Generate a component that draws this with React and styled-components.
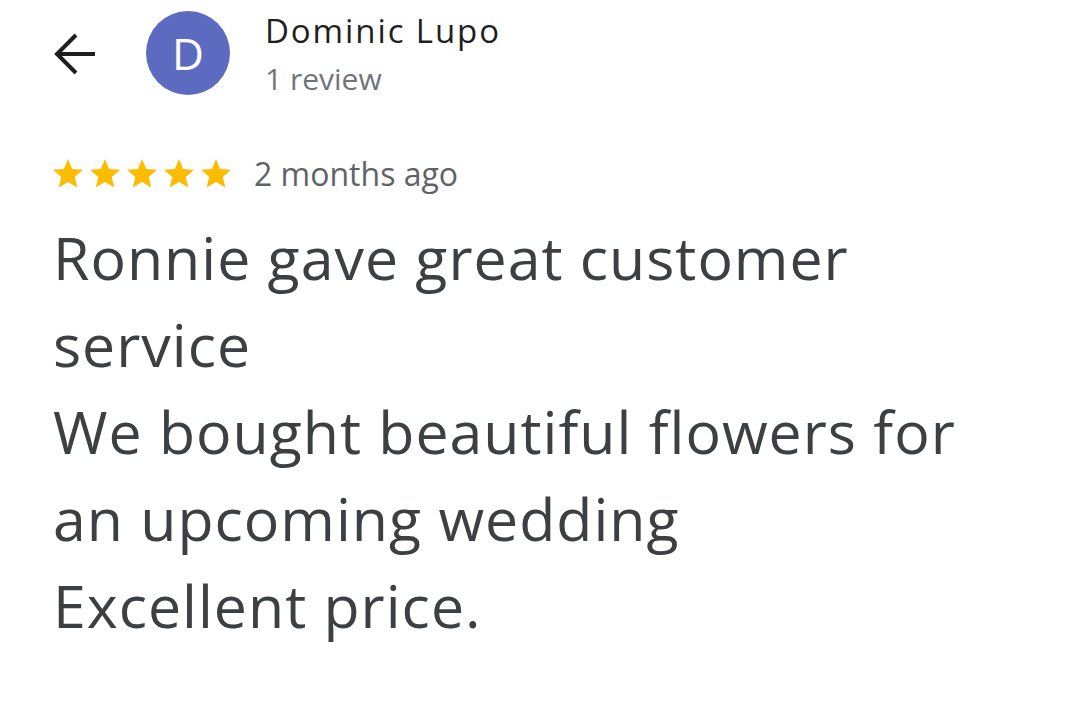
import React from 'react';
import styled, { createGlobalStyle } from 'styled-components';

const GlobalStyle = createGlobalStyle`
  html, body {
    margin: 0;
    padding: 0;
    background: #ffffff;
  }
  body {
    font-family: "Open Sans", Roboto, Arial, sans-serif;
    -webkit-font-smoothing: antialiased;
  }
`;

const Page = styled.div`
  width: 1080px;
  height: 705px;
  box-sizing: border-box;
  padding: 0 0 0 50px;
  overflow: hidden;
`;

const Header = styled.div`
  display: flex;
  align-items: flex-start;
  height: 100px;
`;

const BackButton = styled.button`
  width: 48px;
  height: 48px;
  margin-top: 30px;
  padding: 0;
  border: none;
  background: none;
  display: flex;
  align-items: center;
  justify-content: center;
  cursor: pointer;
`;

const Avatar = styled.div`
  width: 84px;
  height: 84px;
  margin: 11px 0 0 48px;
  border-radius: 50%;
  background: #5c6bc0;
  color: #ffffff;
  font-size: 44px;
  line-height: 1;
  display: flex;
  align-items: center;
  justify-content: center;
`;

const Who = styled.div`
  margin: 11px 0 0 35px;
  display: flex;
  flex-direction: column;
`;

const Name = styled.div`
  font-size: 33px;
  line-height: 40px;
  letter-spacing: 1.9px;
  color: #1f1f1f;
`;

const Sub = styled.div`
  margin-top: 10px;
  font-size: 30px;
  line-height: 36px;
  color: #70757a;
`;

const Meta = styled.div`
  display: flex;
  align-items: center;
  height: 36px;
  margin-top: 56px;
`;

const Stars = styled.div`
  display: flex;
  gap: 1px;
`;

const When = styled.span`
  margin-left: 20px;
  font-size: 32px;
  line-height: 36px;
  color: #5f6368;
`;

const Body = styled.p`
  margin: 22px 0 0 3px;
  font-size: 59px;
  line-height: 87px;
  letter-spacing: 1px;
  color: #3c4043;
`;

const Star = () => (
  <svg width="36" height="36" viewBox="0 0 24 24">
    <path
      fill="#fbbc04"
      d="M12 17.27L18.18 21l-1.64-7.03L22 9.24l-7.19-.61L12 2 9.19 8.63 2 9.24l5.46 4.73L5.82 21z"
    />
  </svg>
);

export default function App() {
  return (
    <>
      <GlobalStyle />
      <Page>
        <Header>
          <BackButton aria-label="Back">
            <svg width="46" height="46" viewBox="0 0 46 46">
              <path
                fill="none"
                stroke="#1f1f1f"
                strokeWidth="4"
                d="M44 23H6M25 4L6 23l19 19"
              />
            </svg>
          </BackButton>
          <Avatar>D</Avatar>
          <Who>
            <Name>Dominic Lupo</Name>
            <Sub>1 review</Sub>
          </Who>
        </Header>
        <Meta>
          <Stars>
            <Star />
            <Star />
            <Star />
            <Star />
            <Star />
          </Stars>
          <When>2 months ago</When>
        </Meta>
        <Body>
          Ronnie gave great customer
          <br />
          service
          <br />
          We bought beautiful flowers for
          <br />
          an upcoming wedding
          <br />
          Excellent price.
        </Body>
      </Page>
    </>
  );
}
